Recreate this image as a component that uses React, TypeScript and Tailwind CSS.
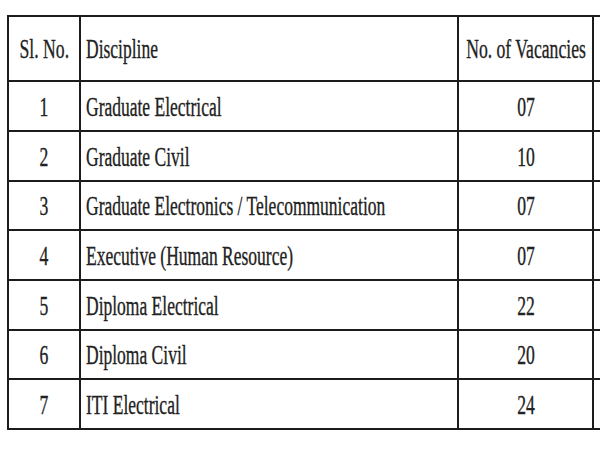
import React from "react";

const rows: { n: string; d: string; v: string; h: string }[] = [
  { n: "1", d: "Graduate Electrical", v: "07", h: "h-[50px]" },
  { n: "2", d: "Graduate Civil", v: "10", h: "h-[50px]" },
  { n: "3", d: "Graduate Electronics / Telecommunication", v: "07", h: "h-[49px]" },
  { n: "4", d: "Executive (Human Resource)", v: "07", h: "h-[50px]" },
  { n: "5", d: "Diploma Electrical", v: "22", h: "h-[50px]" },
  { n: "6", d: "Diploma Civil", v: "20", h: "h-[49px]" },
  { n: "7", d: "ITI Electrical", v: "24", h: "h-[50px]" },
];

function C({ children }: { children: React.ReactNode }) {
  return (
    <span className="inline-block whitespace-nowrap [transform:scaleX(0.63)] origin-center">
      {children}
    </span>
  );
}

function L({ children }: { children: React.ReactNode }) {
  return (
    <span className="inline-block whitespace-nowrap [transform:scaleX(0.625)] origin-left">
      {children}
    </span>
  );
}

function Row({
  a,
  b,
  c,
  h,
}: {
  a: React.ReactNode;
  b: React.ReactNode;
  c: React.ReactNode;
  h: string;
}) {
  return (
    <div className={`flex ${h} border-b-2 border-[#1c1c1c]`}>
      <div className="w-[72px] shrink-0 border-r-2 border-[#1c1c1c] flex items-center justify-center pt-[1px]">
        <C>{a}</C>
      </div>
      <div className="w-[378px] shrink-0 border-r-2 border-[#1c1c1c] flex items-center pl-[5px] pt-[1px]">
        <L>{b}</L>
      </div>
      <div className="w-[135px] shrink-0 border-r-2 border-[#1c1c1c] flex items-center justify-center pt-[1px]">
        <C>{c}</C>
      </div>
      <div className="w-[100px] shrink-0" />
    </div>
  );
}

export default function App() {
  return (
    <div className="w-[600px] h-[450px] overflow-hidden bg-white">
      <div className="pt-[15px] pl-[7px]">
        <div className="w-[700px] border-t-2 border-l-2 border-[#1c1c1c] font-['Liberation_Serif',serif] text-[28px] leading-none text-[#222] [-webkit-text-stroke:0.35px_#222]">
          <Row a="Sl. No." b="Discipline" c="No. of Vacancies" h="h-[65px]" />
          {rows.map((r) => (
            <Row key={r.n} a={r.n} b={r.d} c={r.v} h={r.h} />
          ))}
        </div>
      </div>
    </div>
  );
}
